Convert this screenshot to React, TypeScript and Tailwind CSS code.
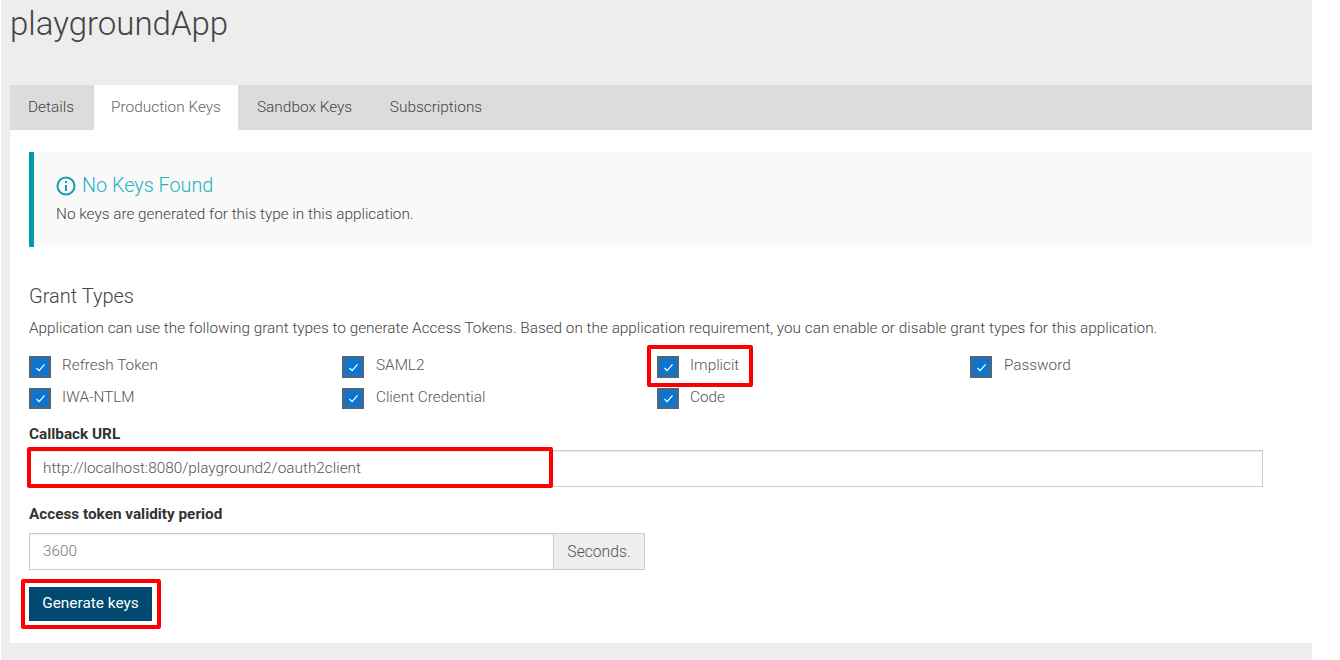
import React from "react";

const row1 = [
  { label: "Refresh Token", w: "w-[313px]", ml: "ml-[11px]" },
  { label: "SAML2", w: "w-[315px]", ml: "ml-[12px]" },
  { label: "Implicit", w: "w-[313px]", ml: "ml-[11px]" },
  { label: "Password", w: "w-[314px]", ml: "ml-[12px]" },
];
const row2 = [
  { label: "IWA-NTLM", w: "w-[313px]", ml: "ml-[11px]" },
  { label: "Client Credential", w: "w-[315px]", ml: "ml-[12px]" },
  { label: "Code", w: "w-[313px]", ml: "ml-[11px]" },
];

function Check({ label, h, w, ml }: { label: string; h: string; w: string; ml: string }) {
  return (
    <div className={`flex items-start ${w}`}>
      <span className={`w-[22px] ${h} bg-[#0a75d2] border-[3px] border-[#46698a] flex items-center justify-center shrink-0`}>
        <svg width="11" height="9" viewBox="0 0 12 10" fill="none">
          <path d="M1.5 5.5 L4.5 8.5 L10.5 1.5" stroke="white" strokeWidth="1.4" />
        </svg>
      </span>
      <span className={`${ml} text-[15.3px] leading-[18px] text-[#555] font-light`}>{label}</span>
    </div>
  );
}

export default function App() {
  return (
    <div className="w-[1340px] h-[660px] bg-white overflow-hidden font-['Roboto',sans-serif]">
      <div className="relative ml-px w-[1311px] h-[660px] bg-[#ededed] pl-[9px]">
        <h1 className="h-[85px] pt-[5px] text-[33px] leading-[38px] font-light text-[#444]">playgroundApp</h1>

        <div className="flex h-[45px] bg-[#dcdcdc] text-[15.4px] font-light text-[#444]">
          <div className="w-[84px] pl-[18px] flex items-center">Details</div>
          <div className="w-[144px] flex items-center justify-center bg-white text-[#666]">Production Keys</div>
          <div className="w-[133px] pl-[19px] flex items-center">Sandbox Keys</div>
          <div className="w-[130px] flex items-center justify-center">Subscriptions</div>
        </div>

        <div className="h-[513px] bg-white pl-[19px] pt-[22px]">
          <div className="h-[95px] bg-[#f9f9f9] border-l-[5px] border-[#029aa3] pl-[22px] pt-[22px]">
            <div className="flex items-center h-[24px] text-[19.8px] font-light text-[#1fb1bf]">
              <svg className="mr-[6px] -mt-px" width="20" height="20" viewBox="0 0 20 20" fill="none">
                <circle cx="10" cy="10" r="8.5" stroke="#129fae" strokeWidth="2" />
                <circle cx="10" cy="6" r="1.2" fill="#129fae" />
                <path d="M10 9 V15" stroke="#129fae" strokeWidth="2" />
              </svg>
              No Keys Found
            </div>
            <p className="mt-[6px] text-[15.33px] leading-[20px] font-light text-[#444]">
              No keys are generated for this type in this application.
            </p>
          </div>

          <h2 className="mt-[37px] text-[20px] leading-[24px] font-light text-[#444]">Grant Types</h2>
          <p className="mt-[10px] text-[15.33px] leading-[20px] font-light text-[#444] whitespace-nowrap">
            Application can use the following grant types to generate Access Tokens. Based on the application requirement, you can enable or disable grant types for this application.
          </p>

          <div className="mt-[18px] flex">
            {row1.map((g) => (
              <Check key={g.label} label={g.label} w={g.w} ml={g.ml} h="h-[22px]" />
            ))}
          </div>
          <div className="mt-[10px] flex">
            {row2.map((g) => (
              <Check key={g.label} label={g.label} w={g.w} ml={g.ml} h="h-[21px]" />
            ))}
          </div>

          <label className="block mt-[15px] text-[15.3px] leading-[20px] font-bold text-[#333]">Callback URL</label>
          <div className="mt-[6px] w-[1234px] h-[37px] border border-[#ccc] shadow-[inset_0_1px_1px_rgba(0,0,0,0.075)] pl-[13px] flex items-center text-[15.35px] font-light text-[#555]">
            http://localhost:8080/playground2/oauth2client
          </div>

          <label className="block mt-[17px] text-[15.3px] leading-[20px] font-bold text-[#333]">Access token validity period</label>
          <div className="mt-[9px] flex h-[37px] w-[616px]">
            <div className="w-[525px] border border-[#ccc] shadow-[inset_0_1px_1px_rgba(0,0,0,0.075)] pl-[13px] flex items-center text-[15.3px] font-light text-[#777]">3600</div>
            <div className="w-[91px] border border-l-0 border-[#ccc] bg-[#eee] flex items-center justify-center text-[15.7px] text-[#555] font-light">Seconds.</div>
          </div>

          <button className="block mt-[17px] w-[123px] h-[34px] bg-[#004a70] text-white text-[15.4px] font-normal">Generate keys</button>
        </div>

        <div className="absolute left-[646px] top-[345px] w-[106px] h-[42px] border-4 border-[#f00] rounded-[2px]" />
        <div className="absolute left-[26px] top-[447px] w-[526px] h-[41px] border-4 border-[#f00] rounded-[2px]" />
        <div className="absolute left-[20px] top-[579px] w-[140px] h-[50px] border-4 border-[#f00] rounded-[2px]" />
      </div>
    </div>
  );
}
